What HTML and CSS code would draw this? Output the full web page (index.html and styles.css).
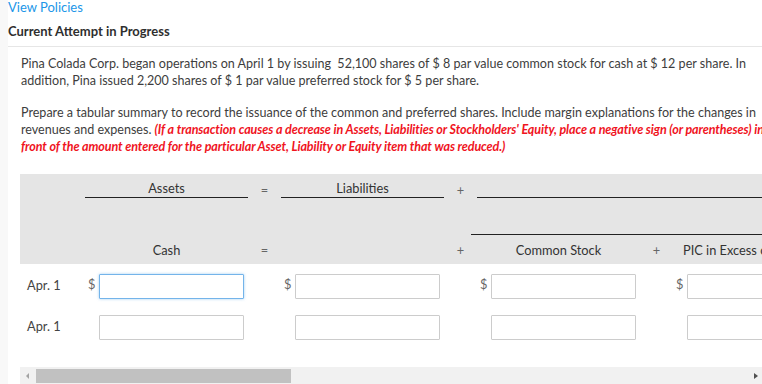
FILE: index.html
```html
<!doctype html>
<html>
<head>
	<meta name="viewport" content="width=device-width, initial-scale=1.0">
	<title>Current Attempt in Progress</title>
	<link rel="stylesheet" href="styles.css">
</head>
<body>
	<div class="page">
		<a class="policies" href="#">View Policies</a>
		<div class="attempt">Current Attempt in Progress</div>

		<div class="question">
			<p>Pina Colada Corp. began operations on April 1 by issuing&nbsp; 52,100 shares of $ 8 par value common stock for cash at $ 12 per share. In addition, Pina issued 2,200 shares of $ 1 par value preferred stock for $ 5 per share.</p>
			<p>Prepare a tabular summary to record the issuance of the common and preferred shares. Include margin explanations for the changes in revenues and expenses. <em class="note">(If a transaction causes a decrease in Assets, Liabilities or Stockholders' Equity, place a negative sign (or parentheses) in front of the amount entered for the particular Asset, Liability or Equity item that was reduced.)</em></p>

			<div class="table-wrap">
				<table class="summary">
					<colgroup>
						<col class="c-date">
						<col class="c-val"><col class="c-op">
						<col class="c-val"><col class="c-op">
						<col class="c-val"><col class="c-op">
						<col class="c-val">
					</colgroup>
					<thead>
						<tr class="h1">
							<th></th>
							<th><div class="rule">Assets</div></th>
							<th class="op">=</th>
							<th><div class="rule">Liabilities</div></th>
							<th class="op">+</th>
							<th colspan="3"><div class="rule">&nbsp;</div></th>
						</tr>
						<tr class="h2">
							<th></th><th></th><th></th><th></th><th></th>
							<th colspan="3"><div class="rule wide">&nbsp;</div></th>
						</tr>
						<tr class="h3">
							<th></th>
							<th>Cash</th>
							<th class="op">=</th>
							<th></th>
							<th class="op">+</th>
							<th>Common Stock</th>
							<th class="op">+</th>
							<th class="left">PIC in Excess of Par - Common</th>
						</tr>
					</thead>
					<tbody>
						<tr>
							<td class="date">Apr. 1</td>
							<td><div class="cell"><span class="cur">$</span><input type="text" class="focus"></div></td>
							<td></td>
							<td><div class="cell"><span class="cur">$</span><input type="text"></div></td>
							<td></td>
							<td><div class="cell"><span class="cur">$</span><input type="text"></div></td>
							<td></td>
							<td><div class="cell"><span class="cur">$</span><input type="text"></div></td>
						</tr>
						<tr>
							<td class="date">Apr. 1</td>
							<td><div class="cell"><span class="cur"></span><input type="text"></div></td>
							<td></td>
							<td><div class="cell"><span class="cur"></span><input type="text"></div></td>
							<td></td>
							<td><div class="cell"><span class="cur"></span><input type="text"></div></td>
							<td></td>
							<td><div class="cell"><span class="cur"></span><input type="text"></div></td>
						</tr>
					</tbody>
				</table>
			</div>

			<div class="scrollbar">
				<span class="arrow arrow-left"></span>
				<div class="track"><div class="thumb"></div></div>
				<span class="arrow arrow-right"></span>
			</div>
		</div>
	</div>
</body>
</html>
```

FILE: styles.css
```css
* {
	box-sizing: border-box;
}
html, body {
	overflow: hidden;
}
body {
	margin: 0;
	background: #f8f8f8;
	font-family: Lato, "Open Sans", sans-serif;
	color: #333;
}
.page {
	margin-left: 8px;
	width: 820px;
	min-height: 384px;
	background: #fff;
}
.policies {
	display: block;
	font-size: 13px;
	line-height: 15px;
	color: #2196e8;
	text-decoration: none;
}
.attempt {
	font-size: 13px;
	font-weight: 700;
	line-height: 16px;
	padding: 8px 0 7px 0;
	color: #2f2f2f;
	border-bottom: 1px solid #e6e6e6;
}
.question {
	padding: 8px 0 0 12px;
}
.question p {
	width: 768px;
	margin: 0 0 15px 1px;
	font-size: 12.55px;
	line-height: 17px;
	color: #3d3d3d;
}
.note {
	color: #f0141e;
	font-weight: 700;
	letter-spacing: -0.1px;
}

.table-wrap {
	width: 742px;
	overflow: hidden;
	margin-top: 19px;
}
.summary {
	border-collapse: collapse;
	table-layout: fixed;
	width: 816px;
	font-size: 12.8px;
}
.c-date { width: 65px; }
.c-val { width: 163px; }
.c-op { width: 33px; }

.summary thead {
	background: #e5e5e5;
}
.summary th {
	padding: 0;
	font-weight: 400;
	text-align: center;
	color: #333;
}
.summary th.op {
	color: #666;
}
.summary th.left {
	text-align: left;
	padding-left: 10px;
	white-space: nowrap;
	overflow: hidden;
}
.h1 th {
	height: 24px;
	vertical-align: bottom;
}
.h2 th {
	height: 37px;
	vertical-align: bottom;
}
.h3 th {
	height: 29px;
	vertical-align: top;
	padding-top: 7px;
	line-height: 16px;
}
.rule {
	border-bottom: 1px solid #222;
	line-height: 16px;
	padding-bottom: 1px;
}
.rule.wide {
	margin-left: -6px;
}

.summary td {
	padding: 0;
	height: 41px;
	vertical-align: top;
}
.summary tbody td {
	padding-top: 10px;
}
.summary tbody td.date {
	padding-left: 7px;
	padding-top: 13px;
	color: #444;
}
.cell {
	display: flex;
	align-items: flex-start;
	padding-left: 3px;
}
.cur {
	width: 11px;
	color: #666;
	padding-top: 2px;
}
.cell input {
	width: 145px;
	height: 25px;
	border: 1px solid #ccc;
	border-radius: 1px;
	background: #fff;
	font-family: inherit;
	outline: none;
}
.cell input.focus {
	border-color: #74b4ea;
	box-shadow: 0 0 3px rgba(102, 175, 233, 0.6);
}

.scrollbar {
	display: flex;
	align-items: center;
	width: 742px;
	height: 18px;
	margin-top: 21px;
	background: #f1f1f1;
}
.arrow {
	width: 0;
	height: 0;
	border-top: 3px solid transparent;
	border-bottom: 3px solid transparent;
}
.arrow-left {
	border-right: 3px solid #a3a3a3;
	margin: 0 7px 0 6px;
}
.arrow-right {
	border-left: 4px solid #505050;
	margin: 0 4px 0 6px;
}
.track {
	flex: 1;
	height: 14px;
}
.thumb {
	width: 255px;
	height: 14px;
	background: #c1c1c1;
}
```
